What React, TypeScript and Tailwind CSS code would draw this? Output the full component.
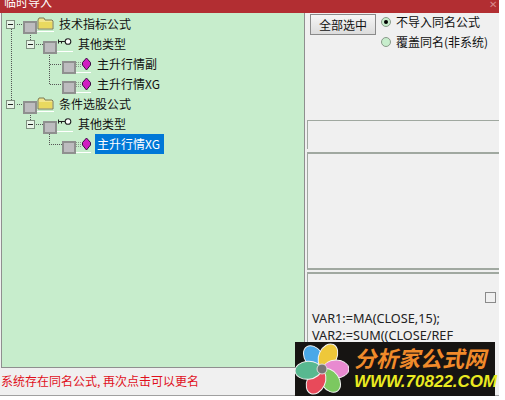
import React from 'react';

const font = { fontFamily: '"Noto Sans CJK SC", "Liberation Sans", sans-serif' };

function Check() {
  return <div className="w-[14px] h-[13px] shrink-0 mt-[6px] bg-[#bdbcbf] border-2 border-[#8f908f]" />;
}

function Expander() {
  return (
    <div className="w-[9px] h-[9px] shrink-0 border border-[#7f8f80] bg-[#e8f5e8] flex items-center justify-center">
      <div className="w-[5px] h-px bg-[#222]" />
    </div>
  );
}

function Folder() {
  return (
    <svg width="17" height="15" viewBox="0 0 17 15" className="shrink-0">
      <path d="M1 3 L2 1 L7 1 L8 3 L15 3 L16 4 L16 12 L1 12 Z" fill="#f3e68d" stroke="#7d7a55" />
      <rect x="2" y="5" width="13" height="6" fill="#e9d95f" />
      <line x1="0" y1="14.5" x2="17" y2="14.5" stroke="#fff" />
    </svg>
  );
}

function Key() {
  return (
    <svg width="16" height="15" viewBox="0 0 16 15" className="shrink-0">
      <circle cx="11" cy="4.5" r="2.8" fill="#fff" stroke="#222" strokeWidth="1.1" />
      <path d="M1.5 2.5 V6.5 M1.5 4.5 H8 M4.5 4.5 V6.5" stroke="#222" fill="none" />
      <line x1="0" y1="14.5" x2="16" y2="14.5" stroke="#fff" />
    </svg>
  );
}

function Gem() {
  return (
    <svg width="15" height="17" viewBox="0 0 15 17" className="shrink-0">
      <path d="M0 6.5 H6 M0 8.5 H6 M0 10.5 H6" stroke="#8a9a8a" strokeDasharray="1 1" />
      <path d="M10.5 2 L14.5 6.5 L14.5 9 L10.5 14 L6.5 9 L6.5 6.5 Z" fill="#d01fc0" stroke="#3a1040" />
      <line x1="0" y1="16.5" x2="15" y2="16.5" stroke="#fff" />
    </svg>
  );
}

function TreeRow({ depth, icon, text, selected }: { depth: number; icon: React.ReactNode; text: string; selected?: boolean }) {
  const pads = ['pl-[6px]', 'pl-[26px]', 'pl-[62px]'];
  return (
    <div className={`h-5 flex items-center ${pads[depth]}`}>
      {depth < 2 && <Expander />}
      <div className={`flex items-center ${depth < 2 ? 'ml-2' : ''}`}>
        <Check />
        {icon}
      </div>
      <span className={`h-5 px-[2px] leading-5 whitespace-nowrap text-[12px] ${depth < 2 ? 'ml-[3px]' : 'ml-[4px]'} ${selected ? 'w-[69px] bg-[#0078d7] text-white' : 'text-[#111]'}`}>
        {text}
      </span>
    </div>
  );
}

function TreeLines() {
  return (
    <svg width="300" height="150" className="absolute left-[-2px] top-[-13px]" fill="none" stroke="#555" strokeDasharray="1 1" shapeRendering="crispEdges">
      <path d="M11.5 29 V100 M17 24.5 H24 M17 104.5 H24" />
      <path d="M30.5 33 V40 M36 44.5 H43 M30.5 113 V120 M36 124.5 H43" />
      <path d="M49.5 53 V84.5 H62 M49.5 64.5 H62 M49.5 134 V144.5 H62" />
    </svg>
  );
}

function Flower() {
  const petals = [
    { r: -35, c: '#4aa8e8' },
    { r: 25, c: '#eec83a' },
    { r: 90, c: '#e88ad0' },
    { r: 145, c: '#7cc860' },
    { r: 205, c: '#e84a5a' },
    { r: 265, c: '#58b890' },
  ];
  return (
    <svg width="54" height="54" viewBox="0 0 54 54" className="shrink-0">
      {petals.map((p, i) => (
        <ellipse key={i} cx="27" cy="13" rx="9" ry="13" fill={p.c} stroke="#f4f4f4" strokeWidth="1" transform={`rotate(${p.r} 27 27)`} />
      ))}
      <circle cx="27" cy="27" r="5" fill="#777" stroke="#ddd" />
    </svg>
  );
}

const marks = [
  { y: 'top-[32px]', x: 'left-[160px]' },
  { y: 'top-[84px]', x: 'left-[250px]' },
  { y: 'top-[134px]', x: 'left-[255px]' },
  { y: 'top-[190px]', x: 'left-[120px]' },
  { y: 'top-[240px]', x: 'left-[250px]' },
  { y: 'top-[296px]', x: 'left-[258px]' },
];

export default function App() {
  return (
    <div className="relative w-[505px] h-[400px] bg-white overflow-hidden" style={font}>
      <div className="w-[499px] h-[396px] flex flex-col bg-[#f0f0f0] border-b border-[#a0a0a0]">
        <div className="h-[13px] shrink-0 bg-[#b22e32] overflow-hidden flex justify-between pl-[4px] pr-[2px]">
          <span className="text-white text-[12px] leading-[12px] -mt-[4px]">临时导入</span>
          <span className="text-[#d98a8c] text-[10px] leading-[8px]">✕</span>
        </div>

        <div className="h-[355px] shrink-0 flex">
          <div className="relative w-[304px] shrink-0 ml-px bg-[#c7edcc] border-l border-r border-b border-[#8f8f8f] pt-[1px]">
            <TreeLines />
            <div className="relative -ml-[2px]">
              <TreeRow depth={0} icon={<Folder />} text="技术指标公式" />
              <TreeRow depth={1} icon={<Key />} text="其他类型" />
              <TreeRow depth={2} icon={<Gem />} text="主升行情副" />
              <TreeRow depth={2} icon={<Gem />} text="主升行情XG" />
              <TreeRow depth={0} icon={<Folder />} text="条件选股公式" />
              <TreeRow depth={1} icon={<Key />} text="其他类型" />
              <TreeRow depth={2} icon={<Gem />} text="主升行情XG" selected />
            </div>
          </div>

          <div className="flex-1 min-w-0 flex flex-col pl-[1px]">
            <div className="h-[107px] shrink-0 flex pl-[4px] pt-px">
              <button className="w-[66px] h-[21px] border border-[#8a8a8a] bg-gradient-to-b from-[#f6f6f6] to-[#dcdcdc] text-[12px] leading-[18px] text-[#111]">
                全部选中
              </button>
              <div className="ml-[5px] -mt-[2px] flex flex-col text-[12px] text-[#111]">
                <div className="h-5 flex items-center gap-[5px]">
                  <div className="w-[10px] h-[10px] rounded-full border border-[#8a9a8a] bg-[#c7edcc] flex items-center justify-center">
                    <div className="w-1 h-1 rounded-full bg-black" />
                  </div>
                  不导入同名公式
                </div>
                <div className="h-5 flex items-center gap-[5px]">
                  <div className="w-[10px] h-[10px] rounded-full border border-[#8a9a8a] bg-[#c7edcc]" />
                  覆盖同名(非系统)
                </div>
              </div>
            </div>
            <div className="h-[29px] shrink-0 border-t border-l border-[#a0a8a0] ml-[1px]" />
            <div className="h-[118px] shrink-0 mt-[3px] border-t-2 border-l border-b-2 border-[#a0a8a0] ml-[1px]" />
            <div className="relative flex-1 mt-[2px] border-t-2 border-l border-[#a0a8a0] ml-[1px] pl-[4px] pt-[36px] text-[12.7px] leading-[17px] text-[#222] overflow-hidden" style={{ fontFamily: '"Noto Sans", "Noto Sans CJK SC", sans-serif' }}>
              <div className="absolute right-[3px] top-[18px] w-[11px] h-[11px] border border-[#8a8a8a]" />
              <div>VAR1:=MA(CLOSE,15);</div>
              <div>VAR2:=SUM((CLOSE/REF</div>
              <div>(CLOSE,2)-1)*100,5);</div>
            </div>
          </div>
        </div>

        <div className="flex-1 pl-px pt-[3px] text-[12px] leading-[20px] text-[#e0101c]">系统存在同名公式, 再次点击可以更名</div>
      </div>

      {marks.map((m, i) => (
        <div key={i} className={`absolute ${m.y} ${m.x} whitespace-nowrap text-[22px] text-[#000]/[0.015] pointer-events-none`}>
          分析家公式网www.70822.com 分析家公式网
        </div>
      ))}

      <div className="absolute left-[295px] top-[342px] w-[200px] h-[54px] bg-[#161412] flex items-center">
        <Flower />
        <div className="ml-[5px] flex flex-col items-start">
          <span className="text-[22px] leading-[26px] font-bold italic text-[#f08a2a]">分析家公式网</span>
          <span className="text-[17px] leading-[24px] font-bold italic text-[#eaea20]" style={{ fontFamily: '"Liberation Sans", sans-serif' }}>WWW.70822.COM</span>
        </div>
      </div>
    </div>
  );
}
